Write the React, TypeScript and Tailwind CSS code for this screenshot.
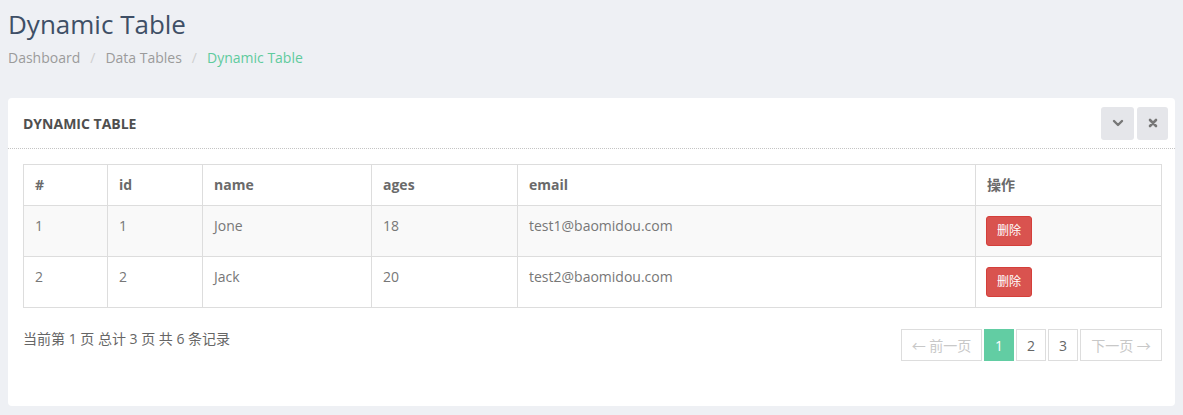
import React from 'react';

const FONT = '"Open Sans", "Noto Sans CJK SC", sans-serif';

const COLUMNS = [
  { key: 'no', label: '#', width: 'w-[84px]' },
  { key: 'id', label: 'id', width: 'w-[95px]' },
  { key: 'name', label: 'name', width: 'w-[169px]' },
  { key: 'ages', label: 'ages', width: 'w-[146px]' },
  { key: 'email', label: 'email', width: 'w-[458px]' },
  { key: 'op', label: '操作', width: '' },
];

const ROWS = [
  { no: 1, id: 1, name: 'Jone', ages: 18, email: 'test1@baomidou.com' },
  { no: 2, id: 2, name: 'Jack', ages: 20, email: 'test2@baomidou.com' },
];

const ChevronDown = () => (
  <svg width="12" height="12" viewBox="0 0 12 12">
    <path d="M2 4 L6 8 L10 4" fill="none" stroke="#777" strokeWidth="2.4" strokeLinecap="round" strokeLinejoin="round" />
  </svg>
);

const Times = () => (
  <svg width="10" height="10" viewBox="0 0 10 10">
    <path d="M2 2 L8 8 M8 2 L2 8" fill="none" stroke="#777" strokeWidth="2.6" strokeLinecap="round" />
  </svg>
);

const PageButton: React.FC<{ children: React.ReactNode; active?: boolean; disabled?: boolean; className?: string }> = ({
  children,
  active,
  disabled,
  className = '',
}) => (
  <span
    className={`h-[32px] flex items-center justify-center border text-[14px] ${
      active
        ? 'bg-[#62cda3] border-[#62cda3] text-white'
        : disabled
        ? 'border-[#ddd] text-[#c8c8c8] bg-white'
        : 'border-[#ddd] text-[#666] bg-white'
    } ${className}`}
  >
    {children}
  </span>
);

export default function App() {
  return (
    <div className="min-h-[415px] bg-[#eef0f4] px-2 pt-[9px] pb-[9px]" style={{ fontFamily: FONT }}>
      <h1 className="text-[26px] leading-[30px] text-[#3e4f66] font-normal">Dynamic Table</h1>
      <div className="mt-[9px] flex items-center text-[14px] leading-[20px] text-[#9b9b9b]">
        <span>Dashboard</span>
        <span className="px-[10px] text-[#cfcfcf]">/</span>
        <span>Data Tables</span>
        <span className="px-[10px] text-[#cfcfcf]">/</span>
        <span className="text-[#5fcb9d]">Dynamic Table</span>
      </div>

      <div className="mt-[30px] bg-white rounded-[4px] h-[308px] flex flex-col">
        <div className="h-[51px] flex items-center justify-between pl-[15px] pr-[7px] border-b border-dotted border-[#c4c4c4]">
          <span className="text-[14px] font-bold text-[#4f4f4f]">DYNAMIC TABLE</span>
          <div className="flex gap-[3px]">
            <span className="w-[33px] h-[33px] rounded-[3px] bg-[#e5e6ea] flex items-center justify-center">
              <ChevronDown />
            </span>
            <span className="w-[31px] h-[33px] rounded-[3px] bg-[#e5e6ea] flex items-center justify-center">
              <Times />
            </span>
          </div>
        </div>

        <div className="pl-[15px] pr-[13px] pt-[15px]">
          <table className="w-full border-collapse border border-[#ddd] text-[14px] text-[#777]">
            <thead>
              <tr>
                {COLUMNS.map((c) => (
                  <th
                    key={c.key}
                    className={`${c.width} border border-[#ddd] px-[11px] py-[10px] leading-[20px] text-left font-bold text-[#6a6a6a]`}
                  >
                    {c.label}
                  </th>
                ))}
              </tr>
            </thead>
            <tbody>
              {ROWS.map((r, i) => (
                <tr key={r.no} className={i % 2 === 0 ? 'bg-[#f9f9f9]' : 'bg-white'}>
                  <td className="border border-[#ddd] px-[11px] pt-[10px] pb-[10px] leading-[20px] align-top">{r.no}</td>
                  <td className="border border-[#ddd] px-[11px] pt-[10px] pb-[10px] leading-[20px] align-top">{r.id}</td>
                  <td className="border border-[#ddd] px-[11px] pt-[10px] pb-[10px] leading-[20px] align-top">{r.name}</td>
                  <td className="border border-[#ddd] px-[11px] pt-[10px] pb-[10px] leading-[20px] align-top">{r.ages}</td>
                  <td className="border border-[#ddd] px-[11px] pt-[10px] pb-[10px] leading-[20px] align-top">{r.email}</td>
                  <td className="border border-[#ddd] px-[10px] pt-[10px] pb-[10px] align-top">
                    <button className="w-[46px] h-[30px] rounded-[3px] bg-[#d9534f] border border-[#d43f3a] text-white text-[12px] leading-none flex items-center justify-center">
                      删除
                    </button>
                  </td>
                </tr>
              ))}
            </tbody>
          </table>

          <div className="mt-[21px] flex justify-between items-start">
            <span className="text-[14px] leading-[20px] text-[#666]">当前第 1 页 总计 3 页 共 6 条记录</span>
            <div className="flex gap-[2px]">
              <PageButton disabled className="w-[81px]">← 前一页</PageButton>
              <PageButton active className="w-[30px]">1</PageButton>
              <PageButton className="w-[30px]">2</PageButton>
              <PageButton className="w-[30px]">3</PageButton>
              <PageButton disabled className="w-[82px]">下一页 →</PageButton>
            </div>
          </div>
        </div>
      </div>
    </div>
  );
}
